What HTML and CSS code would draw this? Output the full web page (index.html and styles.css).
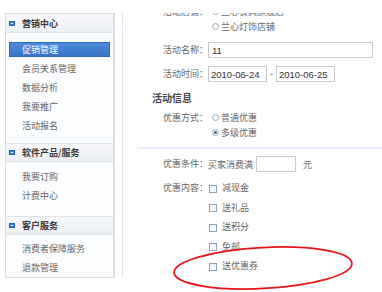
FILE: index.html
```html
<!DOCTYPE html>
<html lang="zh-CN">
<head>
    <meta charset="UTF-8">
    <meta name="viewport" content="width=device-width, initial-scale=1.0">
    <title>促销管理</title>
    <link rel="stylesheet" href="styles.css">
</head>
<body>
    <div class="page">
        <div class="sidebar">
            <div class="menu-head"><span class="toggle"></span>营销中心</div>
            <ul class="menu-list first">
                <li class="active">促销管理</li>
                <li>会员关系管理</li>
                <li>数据分析</li>
                <li>我要推广</li>
                <li>活动报名</li>
            </ul>
            <div class="menu-head"><span class="toggle"></span>软件产品/服务</div>
            <ul class="menu-list second">
                <li>我要订购</li>
                <li>计费中心</li>
            </ul>
            <div class="menu-head"><span class="toggle"></span>客户服务</div>
            <ul class="menu-list last">
                <li>消费者保障服务</li>
                <li>退款管理</li>
            </ul>
        </div>

        <div class="main">
            <div class="form">
                <div class="row shops">
                    <div class="label">活动店铺：</div>
                    <div class="options">
                        <label class="radio"><span class="circle"></span>兰心食具旗舰店</label>
                        <label class="radio"><span class="circle"></span>兰心灯饰店铺</label>
                    </div>
                </div>
                <div class="row input-row name-row">
                    <div class="label">活动名称：</div>
                    <input type="text" class="text-input wide" value="11">
                </div>
                <div class="row input-row time-row">
                    <div class="label">活动时间：</div>
                    <input type="text" class="text-input date" value="2010-06-24">
                    <span class="dash">-</span>
                    <input type="text" class="text-input date" value="2010-06-25">
                </div>

                <h3 class="section-title">活动信息</h3>

                <div class="row mode-row">
                    <div class="label">优惠方式：</div>
                    <div class="options">
                        <label class="radio"><span class="circle"></span>普通优惠</label>
                        <label class="radio"><span class="circle checked"></span>多级优惠</label>
                    </div>
                </div>

                <div class="divider"></div>

                <div class="row input-row cond-row">
                    <div class="label">优惠条件：</div>
                    <span>买家消费满</span>
                    <input type="text" class="text-input amount" value="">
                    <span class="unit">元</span>
                </div>

                <div class="row content-row">
                    <div class="label">优惠内容：</div>
                    <div class="options">
                        <label class="check"><span class="box"></span>减现金</label>
                        <label class="check"><span class="box"></span>送礼品</label>
                        <label class="check"><span class="box"></span>送积分</label>
                        <label class="check"><span class="box"></span>免邮</label>
                        <label class="check"><span class="box"></span>送优惠券</label>
                    </div>
                </div>
            </div>
        </div>
    </div>

    <!-- red annotation ring drawn over the page -->
    <svg class="mark" width="382" height="292" viewBox="0 0 382 292">
        <ellipse cx="263" cy="268" rx="89" ry="20.5" transform="rotate(-3 263 268)" fill="none" stroke="#e8141c" stroke-width="1.8"/>
    </svg>
</body>
</html>
```

FILE: styles.css
```css
body {
    margin: 0;
    background: #fff;
    font-family: "Noto Sans CJK SC", "Noto Sans", sans-serif;
    font-size: 9px;
    color: #666;
    overflow: hidden;
}
.page {
    display: flex;
    align-items: flex-start;
    gap: 7px;
    padding: 13px 0 0 5px;
}

/* left menu */
.sidebar {
    width: 110px;
    flex: none;
    box-sizing: border-box;
    background: #fbfcfe;
    border: 1px solid #d6dde5;
    border-right-width: 2px;
}
.menu-head {
    display: flex;
    align-items: center;
    box-sizing: border-box;
    height: 19px;
    padding-left: 3px;
    background: linear-gradient(#f6f8fa, #eceff3);
    border-top: 1px solid #dde3ea;
    border-bottom: 1px solid #dde3ea;
    font-weight: bold;
    color: #3a3a3a;
}
.menu-head:first-child {
    border-top: none;
}
.toggle {
    position: relative;
    width: 6px;
    height: 5px;
    margin-right: 7px;
    background: #3a7bd5;
    border: 1px solid #2c66b8;
    box-sizing: border-box;
}
.toggle::after {
    content: "";
    position: absolute;
    left: 1px;
    right: 1px;
    top: 1px;
    height: 1px;
    background: #fff;
}
.menu-list {
    list-style: none;
    margin: 0;
    padding: 0;
}
.menu-list.first { padding: 7px 0 8px; }
.menu-list.second { padding: 5px 0 11px; }
.menu-list.last { padding: 4px 0 0; }
.menu-list li {
    height: 19px;
    line-height: 19px;
    padding-left: 16px;
    color: #666;
}
.menu-list li.active {
    box-sizing: border-box;
    height: 15px;
    line-height: 13px;
    margin: 2px 3px;
    padding-left: 12px;
    background: linear-gradient(#4f8bd8, #3774c9);
    border: 1px solid #2f69ba;
    color: #fff;
}

/* main form */
.main {
    flex: 1;
    height: 264px;
    border-left: 1px solid #e2e6eb;
    overflow: hidden;
}
.form {
    margin-top: -9px;
}
.row {
    display: flex;
    align-items: flex-start;
}
.label {
    width: 85px;
    flex: none;
    text-align: right;
    line-height: 15px;
    color: #666;
}
.options {
    display: flex;
    flex-direction: column;
}
.radio {
    display: flex;
    align-items: center;
    height: 15px;
}
.circle {
    position: relative;
    width: 7px;
    height: 7px;
    margin: 0 2px 0 4px;
    box-sizing: border-box;
    border: 1px solid #a2adba;
    border-radius: 50%;
    background: linear-gradient(#f2f4f6, #fff);
}
.circle.checked::after {
    content: "";
    position: absolute;
    left: 1px;
    top: 1px;
    width: 3px;
    height: 3px;
    border-radius: 50%;
    background: #3c5f86;
}

.input-row {
    align-items: center;
    height: 16px;
}
.input-row .label {
    line-height: 16px;
}
.name-row,
.time-row {
    margin-top: 8px;
}
.text-input {
    box-sizing: border-box;
    height: 16px;
    margin: 0;
    padding: 0 2px;
    border: 1px solid #c9c9c9;
    font-family: "Liberation Sans", sans-serif;
    font-size: 9.5px;
    color: #333;
    outline: none;
}
.text-input.wide { width: 165px; padding-left: 3px; }
.text-input.date { width: 59px; }
.text-input.amount { width: 40px; margin-left: 3px; }
.dash {
    width: 9px;
    text-align: center;
    font-family: "Liberation Sans", sans-serif;
}
.unit {
    margin-left: 7px;
}

.section-title {
    margin: 9px 0 0;
    padding-left: 29px;
    line-height: 14px;
    font-size: 10px;
    font-weight: bold;
    color: #444;
}
.mode-row {
    margin-top: 5px;
}
.divider {
    height: 2px;
    margin: 7px 0 0 14px;
    background: #e6edf8;
}
.cond-row {
    margin-top: 7px;
}
.content-row {
    margin-top: 6px;
}
.content-row .label {
    line-height: 19.5px;
}
.check {
    display: flex;
    align-items: center;
    height: 19.5px;
}
.box {
    width: 8px;
    height: 8px;
    margin: 2px 5px 0 1px;
    box-sizing: border-box;
    border: 1px solid #8ea3ba;
    background: linear-gradient(#eef1f5, #fff);
}

.mark {
    position: absolute;
    left: 0;
    top: 0;
    pointer-events: none;
}
```
